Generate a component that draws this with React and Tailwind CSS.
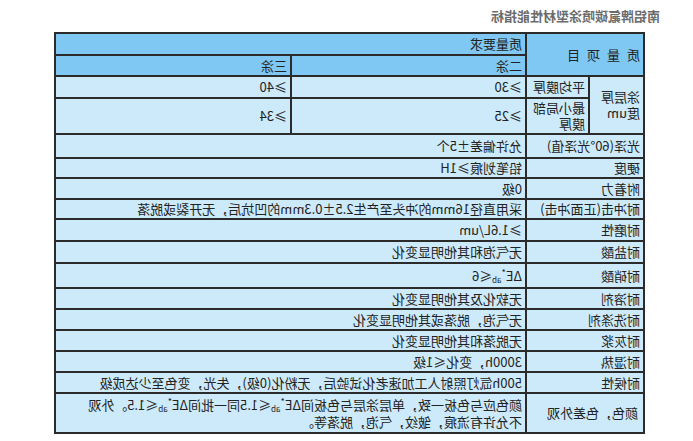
const font = { fontFamily: '"Noto Sans CJK SC", "Noto Sans", sans-serif' };

const rows = [
  { name: "光泽(60°光泽值)", value: "允许偏差±5个", h: "h-[24px]" },
  { name: "硬度", value: "铅笔划痕≥1H", h: "h-[20px]" },
  { name: "附着力", value: "0级", h: "h-[21px]" },
  { name: "耐冲击(正面冲击)", value: "采用直径16mm的冲头至产生2.5±0.3mm的凹坑后，无开裂或脱落", h: "h-[20px]" },
  { name: "耐磨性", value: "≥1.6L/um", h: "h-[22px]" },
  { name: "耐盐酸", value: "无气泡和其他明显变化", h: "h-[22px]" },
  { name: "耐硝酸", value: "de", h: "h-[25px]" },
  { name: "耐溶剂", value: "无软化及其他明显变化", h: "h-[21px]" },
  { name: "耐洗涤剂", value: "无气泡，脱落或其他明显变化", h: "h-[21px]" },
  { name: "耐灰浆", value: "无脱落和其他明显变化", h: "h-[21px]" },
  { name: "耐湿热", value: "3000h，变化≤1级", h: "h-[21px]" },
  { name: "耐候性", value: "500h氙灯照射人工加速老化试验后，无粉化(0级)，失光，变色至少达成级", h: "h-[21px]" },
];

// ΔE*ab with the star raised and "ab" lowered, kept inside the line box
function DeltaE() {
  return (
    <span>
      ΔE
      <span className="relative -top-[5px] text-[9px] leading-none">*</span>
      <span className="relative top-[2px] text-[8px] leading-none">ab</span>
    </span>
  );
}

const cell = "border-2 border-[#2b2b2b] px-[3px] align-middle leading-[16px]";

export default function App() {
  return (
    <div className="w-[693px] h-[441px] bg-white -scale-x-100 overflow-hidden" style={font}>
      <div className="pl-[33px] pt-[6px] h-[32px] text-[13px] font-bold text-[#6b6b6b]">
        南铝牌氟碳喷涂型材性能指标
      </div>
      <table className="ml-[48px] w-[589px] table-fixed border-collapse text-[13px] text-[#222]">
        <colgroup>
          <col className="w-[55px]" />
          <col className="w-[63px]" />
          <col className="w-[235px]" />
          <col className="w-[236px]" />
        </colgroup>
        <tbody>
          <tr className="h-[22px] bg-[#7fc8f3]">
            <td rowSpan={2} colSpan={2} className={cell + " tracking-[7px]"}>
              质量项目
            </td>
            <td colSpan={2} className={cell}>质量要求</td>
          </tr>
          <tr className="h-[21px] bg-[#7fc8f3]">
            <td className={cell}>二涂</td>
            <td className={cell}>三涂</td>
          </tr>
          <tr className="h-[22px] bg-[#cdeafb]">
            <td rowSpan={2} className={cell}>涂层厚度um</td>
            <td className={cell}>平均膜厚</td>
            <td className={cell}>≥30</td>
            <td className={cell}>≥40</td>
          </tr>
          <tr className="h-[36px] bg-[#cdeafb]">
            <td className={cell}>最小局部膜厚</td>
            <td className={cell}>≥25</td>
            <td className={cell}>≥34</td>
          </tr>
          {rows.map((r) => (
            <tr key={r.name} className={r.h + " bg-[#cdeafb]"}>
              <td colSpan={2} className={cell + " whitespace-nowrap"}>{r.name}</td>
              <td colSpan={2} className={cell + " whitespace-nowrap"}>
                {r.value === "de" ? (
                  <span>
                    <DeltaE />≤6
                  </span>
                ) : (
                  r.value
                )}
              </td>
            </tr>
          ))}
          <tr className="h-[40px] bg-[#cdeafb]">
            <td colSpan={2} className={cell + " pl-[5px]"}>颜色，色差外观</td>
            <td colSpan={2} className={cell + " whitespace-nowrap leading-[17px]"}>
              颜色应与色板一致，单层涂层与色板间<DeltaE />≤1.5同一批间<DeltaE />≤1.5。外观
              <br />
              不允许有流痕，皱纹，气泡，脱落等。
            </td>
          </tr>
        </tbody>
      </table>
    </div>
  );
}
